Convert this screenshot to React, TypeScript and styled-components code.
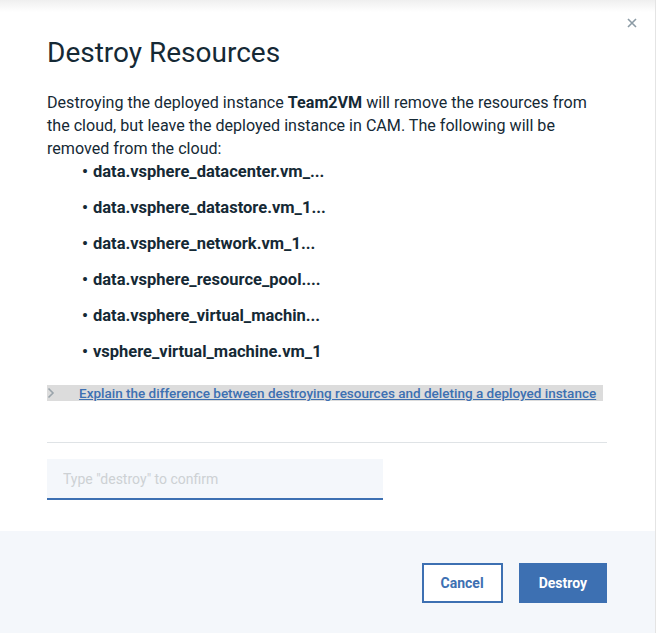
import styled, { createGlobalStyle } from 'styled-components';

const GlobalStyle = createGlobalStyle`
  html, body {
    margin: 0;
    padding: 0;
    background: #ffffff;
  }
  body {
    font-family: Roboto, 'Liberation Sans', sans-serif;
    color: #152935;
  }
`;

const Page = styled.div`
  width: 658px;
  height: 633px;
  display: flex;
  overflow: hidden;
`;

const Modal = styled.div`
  width: 655px;
  height: 633px;
  display: flex;
  flex-direction: column;
  position: relative;
  background: linear-gradient(#efefef 0px, #ffffff 12px);
  border-right: 1px solid #e4e4e4;
`;

const Close = styled.button`
  position: absolute;
  top: 17px;
  right: 17px;
  width: 12px;
  height: 12px;
  padding: 0;
  border: none;
  background: none;
  display: flex;
  cursor: pointer;
`;

const Body = styled.div`
  flex: 1;
  padding: 36px 48px 0 47px;
  display: flex;
  flex-direction: column;
`;

const Title = styled.h2`
  margin: 0;
  font-size: 28px;
  font-weight: 400;
  line-height: 34px;
  color: #152935;
`;

const Text = styled.p`
  margin: 21px 0 0;
  font-size: 16.1px;
  line-height: 23px;
  color: #152935;
`;

const List = styled.ul`
  margin: -7px 0 0;
  padding: 0 0 0 35px;
  list-style: none;
`;

const Item = styled.li`
  font-size: 16.5px;
  font-weight: 700;
  height: 36px;
  display: flex;
  align-items: center;
  &::before {
    content: '•';
    margin-right: 5px;
  }
`;

const Explain = styled.div`
  margin-top: 16px;
  height: 16px;
  background: #dcdcdc;
  display: flex;
  align-items: center;
  width: 556px;
`;

const Chevron = styled.span`
  width: 32px;
  display: flex;
  align-items: center;
`;

const ExplainLink = styled.a`
  font-size: 13.5px;
  font-weight: 500;
  color: #3d70b2;
  text-decoration: underline;
  white-space: nowrap;
`;

const Divider = styled.hr`
  margin: 41px 0 0;
  border: none;
  border-top: 1px solid #dfe3e6;
`;

const Input = styled.input`
  margin-top: 16px;
  width: 336px;
  height: 41px;
  box-sizing: border-box;
  border: none;
  border-bottom: 2px solid #3d70b2;
  background: #f4f7fb;
  padding: 0 16px;
  font-family: Roboto, 'Liberation Sans', sans-serif;
  font-size: 14px;
  color: #152935;
  outline: none;
  caret-color: #152935;
  &::placeholder {
    color: #cdd1d4;
  }
`;

const Footer = styled.div`
  height: 102px;
  background: #f4f7fb;
  display: flex;
  justify-content: flex-end;
  align-items: flex-start;
  gap: 16px;
  padding: 32px 48px 0 0;
  box-sizing: border-box;
`;

const Button = styled.button<{ $primary?: boolean }>`
  height: 40px;
  padding: 0 ${(p) => (p.$primary ? '18px' : '17px')};
  box-sizing: border-box;
  font-family: Roboto, 'Liberation Sans', sans-serif;
  font-size: 14px;
  font-weight: 700;
  border: 2px solid #3d70b2;
  background: ${(p) => (p.$primary ? '#3d70b2' : '#ffffff')};
  color: ${(p) => (p.$primary ? '#ffffff' : '#3d70b2')};
  cursor: pointer;
`;

const resources = [
  'data.vsphere_datacenter.vm_...',
  'data.vsphere_datastore.vm_1...',
  'data.vsphere_network.vm_1...',
  'data.vsphere_resource_pool....',
  'data.vsphere_virtual_machin...',
  'vsphere_virtual_machine.vm_1',
];

export default function App() {
  return (
    <>
      <GlobalStyle />
      <Page>
        <Modal>
          <Close aria-label="close">
            <svg width="12" height="12" viewBox="0 0 12 12">
              <path d="M2 2 L10 10 M10 2 L2 10" stroke="#8c9ba5" strokeWidth="1.6" />
            </svg>
          </Close>
          <Body>
            <Title>Destroy Resources</Title>
            <Text>
              Destroying the deployed instance <b>Team2VM</b> will remove the resources from
              the cloud, but leave the deployed instance in CAM. The following will be
              removed from the cloud:
            </Text>
            <List>
              {resources.map((r) => (
                <Item key={r}>{r}</Item>
              ))}
            </List>
            <Explain>
              <Chevron>
                <svg width="8" height="12" viewBox="0 0 8 12">
                  <path d="M1.5 1.5 L6 6 L1.5 10.5" stroke="#9aa4ab" strokeWidth="1.6" fill="none" />
                </svg>
              </Chevron>
              <ExplainLink href="#">
                Explain the difference between destroying resources and deleting a deployed instance
              </ExplainLink>
            </Explain>
            <Divider />
            <Input placeholder={'Type "destroy" to confirm'} autoFocus />
          </Body>
          <Footer>
            <Button>Cancel</Button>
            <Button $primary>Destroy</Button>
          </Footer>
        </Modal>
      </Page>
    </>
  );
}
